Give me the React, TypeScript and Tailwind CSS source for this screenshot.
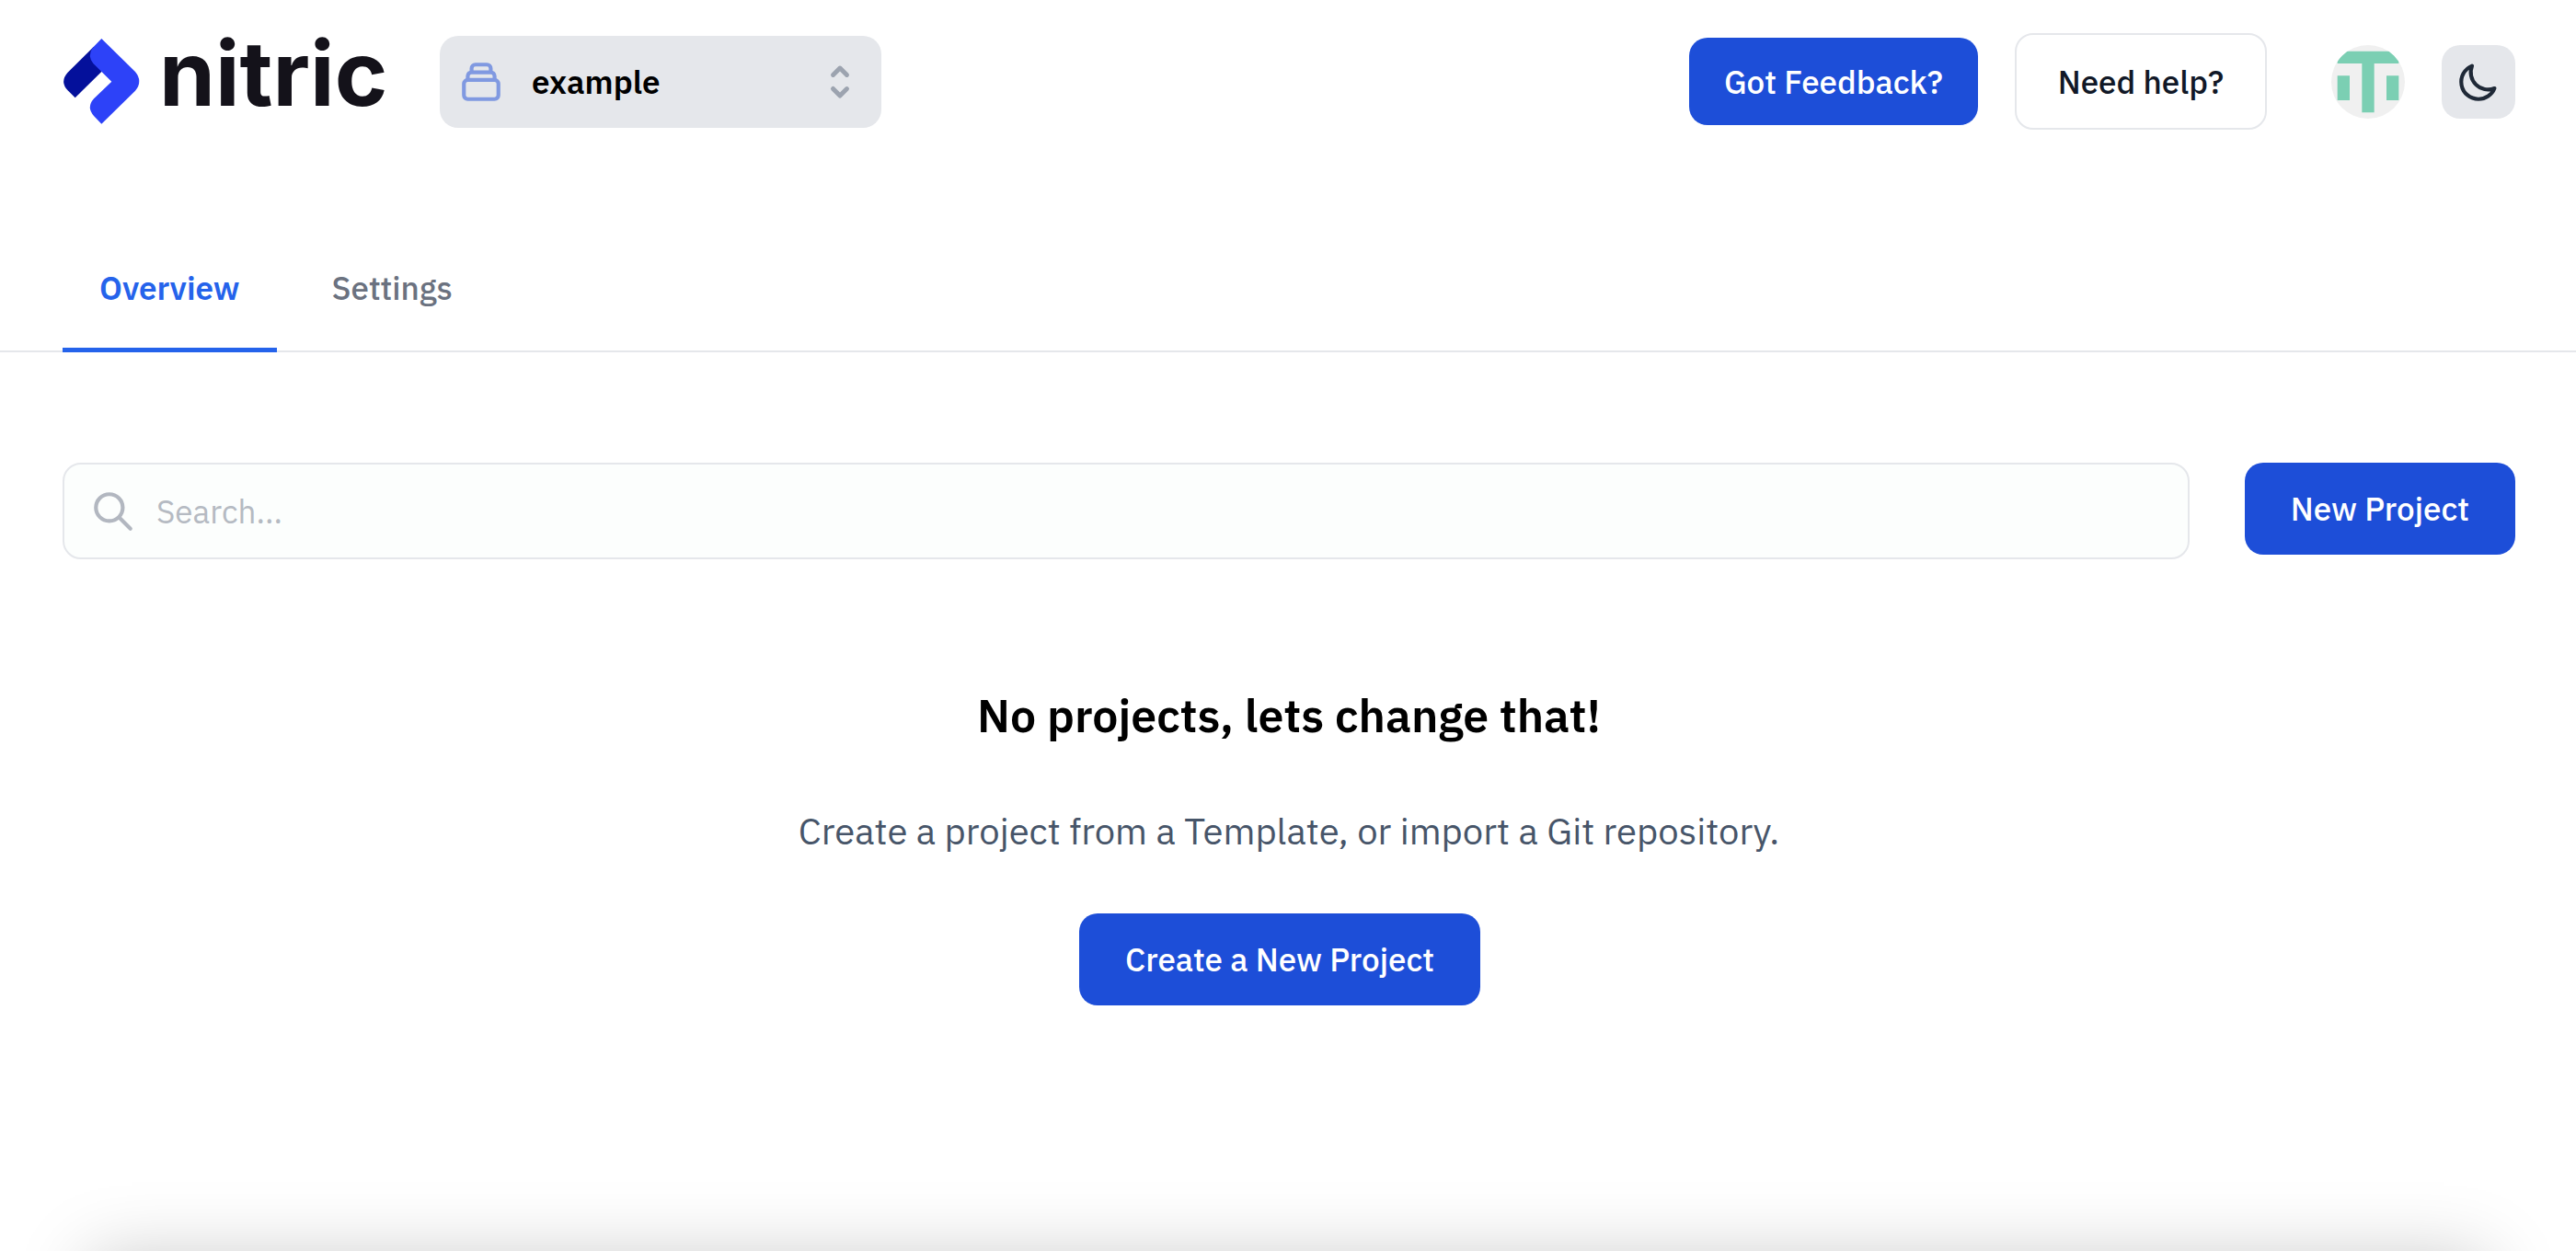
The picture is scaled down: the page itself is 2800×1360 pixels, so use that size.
import type { ReactNode } from "react";

function Logo() {
  return (
    <svg viewBox="0 0 350 93" className="block h-[93px] w-[350px] overflow-visible" role="img" aria-label="nitric">
      <g transform="scale(0.3333) translate(-83 -65)">
        <path fill="#04109b" d="M184 92 L100 175 Q73 205 100 234 L124 258 L210 173 L214 140 Z" />
        <path
          fill="#2d42f8"
          d="M210 65 L320 173 Q346 205 320 235 L210 343 L185 317 Q160 289 185 261 L243 205 L183 146 Q163 121 181 95 Z"
        />
      </g>
      <text x="105" y="73" fill="#14121a" className="font-[Inter] text-[98px] font-bold">
        nitric
      </text>
    </svg>
  );
}

function OutlineIcon({ d }: { d: string }) {
  return (
    <svg
      viewBox="0 0 24 24"
      fill="none"
      stroke="currentColor"
      strokeWidth={2}
      strokeLinecap="round"
      strokeLinejoin="round"
      className="block size-[50px] shrink-0"
      aria-hidden="true"
    >
      <path d={d} />
    </svg>
  );
}

const collectionPath =
  "M19 11H5m14 0a2 2 0 012 2v6a2 2 0 01-2 2H5a2 2 0 01-2-2v-6a2 2 0 012-2m14 0V9a2 2 0 00-2-2M5 11V9a2 2 0 012-2m0 0V5a2 2 0 012-2h6a2 2 0 012 2v2M7 7h10";
const moonPath =
  "M20.354 15.354A9 9 0 018.646 3.646 9.003 9.003 0 0012 21a9.003 9.003 0 008.354-5.646z";
const searchPath = "M21 21l-6-6m2-5a7 7 0 11-14 0 7 7 0 0114 0z";

function OrganisationSelect() {
  return (
    <div className="grid w-[480px] items-center">
      <select
        aria-label="Organisation"
        className="col-start-1 row-start-1 h-[100px] w-full appearance-none rounded-[20px] bg-[#e5e7eb] pr-20 pl-[100px] font-semibold text-black"
      >
        <option>example</option>
      </select>
      <div className="pointer-events-none col-start-1 row-start-1 flex items-center justify-between px-5">
        <span className="text-[#1d4ed8] opacity-50">
          <OutlineIcon d={collectionPath} />
        </span>
        <svg viewBox="0 0 20 20" fill="#9ca3af" className="block size-[50px]" aria-hidden="true">
          <path d="M10 3a1 1 0 01.707.293l3 3a1 1 0 01-1.414 1.414L10 5.414 7.707 7.707a1 1 0 01-1.414-1.414l3-3A1 1 0 0110 3zm-3.707 9.293a1 1 0 011.414 0L10 14.586l2.293-2.293a1 1 0 011.414 1.414l-3 3a1 1 0 01-1.414 0l-3-3a1 1 0 010-1.414z" />
        </svg>
      </div>
    </div>
  );
}

function Avatar() {
  return (
    <svg viewBox="0 0 6 6" className="block size-20 rounded-full bg-[#f0f0f0]" role="img" aria-label="Account">
      <path fill="#7bcfb3" d="M.5 .5h5v1h-2v4h-1v-4h-2zM.5 2.5h1v2h-1zM4.5 2.5h1v2h-1z" />
    </svg>
  );
}

function PrimaryButton({ children }: { children: ReactNode }) {
  return (
    <button
      type="button"
      className="h-[100px] shrink-0 rounded-[20px] bg-[#1d4ed8] px-[50px] font-medium whitespace-nowrap text-white"
    >
      {children}
    </button>
  );
}

export default function App() {
  return (
    <div className="relative min-h-screen overflow-hidden bg-white font-['IBM_Plex_Sans','Roboto',sans-serif] text-[35px] leading-[50px]">
      <header className="flex items-center justify-between pt-9 pr-[66px] pl-[68px]">
        <div className="flex items-center gap-[60px]">
          <a href="#home">
            <Logo />
          </a>
          <OrganisationSelect />
        </div>
        <div className="flex items-center">
          <div className="flex items-center gap-10">
            <a
              href="#feedback"
              className="flex h-[95px] items-center rounded-[20px] bg-[#1d4ed8] px-[38px] font-medium whitespace-nowrap text-white"
            >
              Got Feedback?
            </a>
            <button
              type="button"
              className="h-[105px] rounded-[20px] border-2 border-[#e5e7eb] px-[45px] font-medium whitespace-nowrap text-[#111827]"
            >
              Need help?
            </button>
          </div>
          <div className="ml-[70px] flex items-center gap-10">
            <button type="button" aria-label="Account menu">
              <Avatar />
            </button>
            <button
              type="button"
              aria-label="Switch to dark mode"
              className="flex size-20 items-center justify-center rounded-[20px] bg-[#e5e7eb] text-[#1f2937]"
            >
              <OutlineIcon d={moonPath} />
            </button>
          </div>
        </div>
      </header>

      <nav className="mt-[107px] border-b-2 border-[#e5e7eb] px-[68px]">
        <div className="-mb-[2px] flex gap-5">
          <a
            href="#overview"
            aria-current="page"
            className="border-b-[5px] border-[#2563eb] px-10 pt-10 pb-10 font-semibold text-[#2563eb]"
          >
            Overview
          </a>
          <a
            href="#settings"
            className="border-b-[5px] border-transparent px-10 pt-10 pb-10 font-medium text-[#6b7280]"
          >
            Settings
          </a>
        </div>
      </nav>

      <main className="pt-[120px] pr-[66px] pl-[68px]">
        <div className="flex items-start gap-[60px]">
          <label className="flex h-[105px] grow items-center rounded-[20px] border-2 border-[#e5e7eb] bg-[#fcfefd] px-7 text-[#b2b7c0]">
            <OutlineIcon d={searchPath} />
            <input
              type="search"
              aria-label="Search projects"
              placeholder="Search..."
              className="ml-[22px] h-full grow bg-transparent text-black outline-none placeholder:text-[#b5bac2]"
            />
          </label>
          <PrimaryButton>New Project</PrimaryButton>
        </div>

        <section className="flex flex-col items-center pt-[135px] text-center">
          <h1 className="text-[50px] leading-[70px] font-semibold text-black">No projects, lets change that!</h1>
          <p className="mt-[60px] mb-[60px] text-[40px] leading-[60px] text-[#475569]">
            Create a project from a Template, or import a Git repository.
          </p>
          <div className="pr-5">
            <PrimaryButton>Create a New Project</PrimaryButton>
          </div>
        </section>
      </main>

      <div
        aria-hidden="true"
        className="absolute inset-x-[68px] top-full h-80 shadow-[0_-22px_76px_-30px_rgba(0,0,0,0.22)]"
      />
    </div>
  );
}
